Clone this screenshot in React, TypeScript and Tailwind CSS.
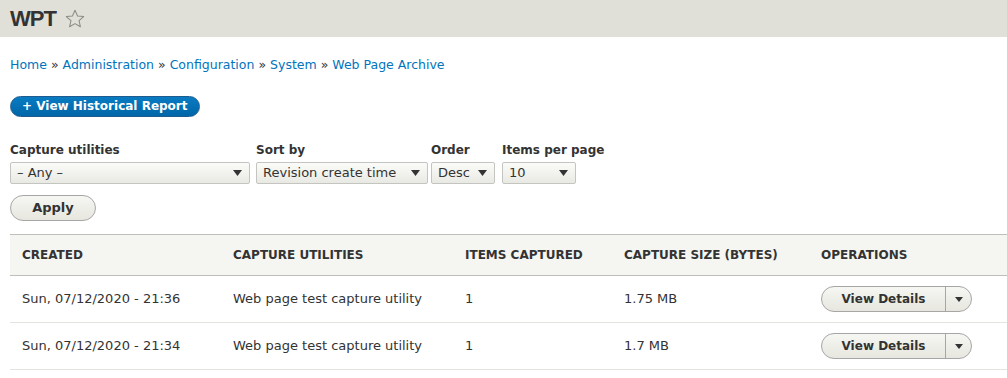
import React from 'react';

const rows = [
  { created: 'Sun, 07/12/2020 - 21:36', utility: 'Web page test capture utility', items: '1', size: '1.75 MB' },
  { created: 'Sun, 07/12/2020 - 21:34', utility: 'Web page test capture utility', items: '1', size: '1.7 MB' },
];

const Caret = () => (
  <svg width="9" height="6" viewBox="0 0 9 6" className="shrink-0">
    <path d="M0 0 L9 0 L4.5 6 Z" fill="#333" />
  </svg>
);

const Select = ({ value, width }: { value: string; width: string }) => (
  <div
    className={`${width} h-[22px] flex items-center justify-between pl-[6px] pr-[7px] border border-[#c4c4c0] rounded-[2px] bg-gradient-to-b from-[#fbfbf9] to-[#e9e9e4] text-[#333] text-[13px]`}
  >
    <span>{value}</span>
    <Caret />
  </div>
);

const Field = ({ label, className, children }: { label: string; className?: string; children: React.ReactNode }) => (
  <div className={`flex flex-col ${className ?? ''}`}>
    <label className="font-bold text-[12px] text-[#333] leading-[15px] mb-[4px]">{label}</label>
    {children}
  </div>
);

const App = () => {
  return (
    <div className="w-[1007px] h-[378px] overflow-hidden bg-white font-['DejaVu_Sans',sans-serif] text-[#333]">
      <div className="h-[37px] bg-[#e0e0d8] flex items-center pl-[10px]">
        <h1 className="font-['Liberation_Sans',sans-serif] font-bold text-[22px] leading-none text-[#333] tracking-[-1px]">
          WPT
        </h1>
        <svg width="22" height="22" viewBox="0 0 24 24" className="ml-[8px]">
          <path
            d="M12 2.5 L14.8 8.7 L21.5 9.3 L16.4 13.8 L17.9 20.4 L12 17 L6.1 20.4 L7.6 13.8 L2.5 9.3 L9.2 8.7 Z"
            fill="none"
            stroke="#8a8a86"
            strokeWidth="1.1"
            strokeLinejoin="round"
          />
        </svg>
      </div>

      <nav className="pl-[10px] pt-[20px] text-[12.5px] leading-[16px] text-[#0074bd]">
        <a>Home</a> <span className="text-[#333]">»</span> <a>Administration</a>{' '}
        <span className="text-[#333]">»</span> <a>Configuration</a> <span className="text-[#333]">»</span>{' '}
        <a>System</a> <span className="text-[#333]">»</span> <a>Web Page Archive</a>
      </nav>

      <div className="pl-[10px] pt-[20px]">
        <button className="h-[21px] px-[11px] rounded-full bg-gradient-to-b from-[#0a7bc2] to-[#0066a8] border border-[#1e5c90] text-white font-bold text-[12px] leading-none">
          + View Historical Report
        </button>
      </div>

      <div className="pl-[10px] pt-[26px] flex">
        <Field label="Capture utilities">
          <Select value="– Any –" width="w-[240px]" />
        </Field>
        <Field label="Sort by" className="ml-[6px]">
          <Select value="Revision create time" width="w-[172px]" />
        </Field>
        <Field label="Order" className="ml-[3px]">
          <Select value="Desc" width="w-[64px]" />
        </Field>
        <Field label="Items per page" className="ml-[7px]">
          <Select value="10" width="w-[74px]" />
        </Field>
      </div>

      <div className="pl-[10px] pt-[11px]">
        <button className="w-[86px] h-[26px] rounded-full border border-[#a6a6a6] bg-gradient-to-b from-[#f6f6f3] to-[#e7e7df] font-bold text-[13px] text-[#333]">
          Apply
        </button>
      </div>

      <table className="ml-[10px] mt-[13px] w-[997px] border-collapse text-[13px]">
        <thead>
          <tr className="bg-[#f5f5f2] border-t border-[#bfbfba] border-b border-b-[#bfbfba] h-[41px] text-left">
            <th className="pl-[12px] w-[211px] font-bold text-[12px] uppercase">Created</th>
            <th className="pl-[12px] w-[232px] font-bold text-[12px] uppercase">Capture utilities</th>
            <th className="pl-[12px] w-[159px] font-bold text-[12px] uppercase">Items captured</th>
            <th className="pl-[12px] w-[197px] font-bold text-[12px] uppercase">Capture size (bytes)</th>
            <th className="pl-[12px] font-bold text-[12px] uppercase">Operations</th>
          </tr>
        </thead>
        <tbody>
          {rows.map((r, i) => (
            <tr key={i} className="h-[47px] border-b border-[#e6e4df]">
              <td className="pl-[12px]">{r.created}</td>
              <td className="pl-[12px]">{r.utility}</td>
              <td className="pl-[12px]">{r.items}</td>
              <td className="pl-[12px]">{r.size}</td>
              <td className="pl-[12px]">
                <div className="inline-flex w-[151px] h-[26px] rounded-full border border-[#a6a6a6] bg-gradient-to-b from-[#f6f6f3] to-[#e7e7df] overflow-hidden">
                  <span className="flex-1 flex items-center justify-center font-bold text-[12px]">View Details</span>
                  <span className="w-[26px] border-l border-[#a6a6a6] flex items-center justify-center">
                    <svg width="8" height="5" viewBox="0 0 8 5">
                      <path d="M0 0 L8 0 L4 5 Z" fill="#333" />
                    </svg>
                  </span>
                </div>
              </td>
            </tr>
          ))}
        </tbody>
      </table>
    </div>
  );
};

export default App;
